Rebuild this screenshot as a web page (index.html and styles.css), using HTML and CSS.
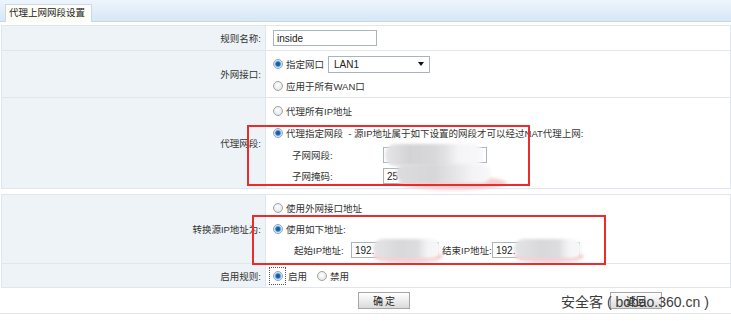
FILE: index.html
```html
<!DOCTYPE html>
<html lang="zh-CN">

<head>
    <meta charset="UTF-8">
    <meta name="viewport" content="width=device-width, initial-scale=1.0">
    <title>代理上网网段设置</title>
    <link rel="stylesheet" href="styles.css">
</head>

<body>
    <div class="tabbar">
        <div class="tab">代理上网网段设置</div>
    </div>

    <table class="form first">
        <colgroup>
            <col class="c-label">
            <col>
        </colgroup>
        <tr class="r-name">
            <td class="label">规则名称:</td>
            <td class="field"><input class="text" type="text" value="inside"></td>
        </tr>
        <tr class="r-wan">
            <td class="label">外网接口:</td>
            <td class="field">
                <div class="line">
                    <input class="radio" type="radio" name="wan" checked><span>指定网口</span>
                    <div class="select"><span>LAN1</span><i class="arrow"></i></div>
                </div>
                <div class="line">
                    <input class="radio" type="radio" name="wan"><span>应用于所有WAN口</span>
                </div>
            </td>
        </tr>
        <tr class="r-seg">
            <td class="label">代理网段:</td>
            <td class="field">
                <div class="line l22">
                    <input class="radio" type="radio" name="seg"><span>代理所有IP地址</span>
                </div>
                <div class="line l22">
                    <input class="radio" type="radio" name="seg" checked><span>代理指定网段&nbsp; - 源IP地址属于如下设置的网段才可以经过NAT代理上网:</span>
                </div>
                <div class="line l22 sub">
                    <span class="sublabel">子网网段:</span>
                    <div class="masked"><input class="text" type="text" value=""><div class="blob b-net"></div></div>
                </div>
                <div class="line sub">
                    <span class="sublabel">子网掩码:</span>
                    <div class="masked"><input class="text" type="text" value="25"><div class="smear s-mask"></div><div class="blob b-mask"></div></div>
                </div>
            </td>
        </tr>
    </table>

    <table class="form second">
        <colgroup>
            <col class="c-label">
            <col>
        </colgroup>
        <tr class="r-src">
            <td class="label">转换源IP地址为:</td>
            <td class="field">
                <div class="line l21">
                    <input class="radio" type="radio" name="src"><span>使用外网接口地址</span>
                </div>
                <div class="line l21">
                    <input class="radio" type="radio" name="src" checked><span>使用如下地址:</span>
                </div>
                <div class="line l21 sub2">
                    <span class="iplabel">起始IP地址:</span>
                    <div class="masked"><input class="text ip" type="text" value="192."><div class="smear s-ip"></div><div class="blob b-ip"></div></div>
                    <span class="iplabel end">结束IP地址:</span>
                    <div class="masked"><input class="text ip" type="text" value="192."><div class="smear s-ip"></div><div class="blob b-ip"></div></div>
                </div>
            </td>
        </tr>
        <tr class="r-on">
            <td class="label">启用规则:</td>
            <td class="field">
                <div class="line">
                    <span class="focus"><input class="radio" type="radio" name="on" checked></span><span>启用</span>
                    <input class="radio off" type="radio" name="on"><span>禁用</span>
                </div>
            </td>
        </tr>
    </table>

    <div class="actions">
        <button class="btn ok">确 定</button>
        <button class="btn back">返回</button>
    </div>

    <div class="mark mark-seg"></div>
    <div class="mark mark-src"></div>
    <div class="watermark">安全客 ( bobao.360.cn )</div>
</body>

</html>
```

FILE: styles.css
```css
* {
    box-sizing: border-box;
}

body {
    margin: 0;
    position: relative;
    overflow: hidden;
    font-family: "Liberation Sans", "Noto Sans CJK SC", sans-serif;
    font-size: 9.5px;
    color: #333;
    background: #fff;
}

.tabbar {
    height: 22px;
    padding: 4px 0 0 5px;
    background: linear-gradient(#eef5fc, #d6e7f5);
    border-bottom: 1px solid #c7d8e8;
}

.tab {
    display: inline-block;
    height: 18px;
    padding: 0 6px 0 3px;
    line-height: 16px;
    font-size: 9.5px;
    color: #222;
    background: #fdfdf6;
    border: 1px solid #c9d9e8;
    border-bottom: none;
}

.form {
    width: 730px;
    margin-left: 1px;
    table-layout: fixed;
    border-collapse: collapse;
    border: 1px solid #dfe6ef;
}

.first {
    margin-top: 3px;
}

.second {
    margin-top: 5px;
}

.c-label {
    width: 264px;
}

.form td {
    padding: 0;
    border-top: 1px solid #dfe6ef;
}

.label {
    text-align: right;
    padding-right: 4px !important;
    background: #eef3f8;
    border-right: 1px solid #dfe6ef;
    color: #333;
}

.field {
    padding-left: 7px !important;
}

.r-name td {
    height: 25px;
}

.r-wan td {
    height: 47px;
}

.r-seg td {
    height: 91px;
}

.r-src td {
    height: 69px;
}

.r-on td {
    height: 24px;
}

.line {
    display: flex;
    align-items: center;
    height: 20px;
    white-space: nowrap;
}

.r-wan .line {
    margin-top: 2px;
}

.l22 {
    height: 22px;
}

.l21 {
    height: 21px;
}

.radio {
    appearance: none;
    width: 10px;
    height: 10px;
    margin: 0 3px 0 0;
    border-radius: 50%;
    border: 1px solid #a3a3a3;
    background: radial-gradient(circle at 45% 40%, #ffffff, #dcdcdc);
    flex: none;
}

.radio:checked {
    border-color: #8fa8c0;
    background: radial-gradient(circle, #0b4c8a 0, #1f6fb8 2px, #9cc3e6 3px, #f2f7fc 4px);
}

.text {
    height: 16px;
    width: 104px;
    padding: 0 3px;
    border: 1px solid #a9b4bf;
    font-family: "Liberation Sans", sans-serif;
    font-size: 10px;
    color: #222;
    background: #fff;
}

.text:focus {
    outline: none;
}

.select {
    display: flex;
    align-items: center;
    justify-content: space-between;
    width: 102px;
    height: 17px;
    margin-left: 4px;
    padding: 0 5px;
    border: 1px solid #a9b4bf;
    font-size: 10px;
    color: #222;
}

.arrow {
    width: 0;
    height: 0;
    border-left: 3px solid transparent;
    border-right: 3px solid transparent;
    border-top: 4px solid #111;
}

.sub {
    padding-left: 19px;
}

.sublabel {
    display: inline-block;
    width: 91px;
}

.sub2 {
    padding-left: 21px;
}

.iplabel {
    display: inline-block;
    width: 57px;
}

.iplabel.end {
    width: 50px;
    margin-left: 3px;
}

.ip {
    width: 88px;
}

.masked {
    position: relative;
}

.blob {
    position: absolute;
    border-radius: 10px;
    filter: blur(1.5px);
}

.b-net {
    left: 2px;
    top: -3px;
    width: 98px;
    height: 22px;
    background: linear-gradient(90deg, #e6e6e8, #d3d3d6 25%, #d8d8db 50%, #e2e2e4 62%, #f5f5f7 75%, #f8f8fa);
}

.b-mask {
    left: 13px;
    top: -4px;
    width: 95px;
    height: 19px;
    background: linear-gradient(90deg, #dcdcdf, #d6d6d9 40%, #e4e4e6 60%, #f3f3f5 80%, #f8f8fa);
}

.b-ip {
    left: 22px;
    top: -3px;
    width: 68px;
    height: 19px;
    background: linear-gradient(90deg, #e4e4e6, #d8d8db 40%, #dcdcdf 65%, #f4f4f6 80%, #f8f8fa);
}

.smear {
    position: absolute;
    border-radius: 50%;
    background: #f6d0d3;
    filter: blur(1.5px);
}

.s-mask {
    left: 16px;
    top: 8px;
    width: 108px;
    height: 14px;
}

.s-ip {
    left: 22px;
    top: 8px;
    width: 70px;
    height: 13px;
}

.focus {
    display: inline-flex;
    align-items: center;
    justify-content: center;
    width: 17px;
    height: 18px;
    margin: 0 2px 0 -4px;
    border: 1px dotted #555;
}

.focus .radio {
    margin: 0;
}

.off {
    margin-left: 10px;
}

.actions {
    display: flex;
    align-items: center;
    height: 26px;
    padding-left: 358px;
    border-bottom: 1px solid #dfe6ef;
}

.btn {
    width: 52px;
    height: 17px;
    padding: 0;
    border: 1px solid #a6a6a6;
    background: linear-gradient(#ffffff, #dadada);
    font-family: "Noto Sans CJK SC", sans-serif;
    font-size: 10px;
    color: #222;
    line-height: 14px;
}

.back {
    margin-left: 200px;
}

.mark {
    position: absolute;
    border: 2px solid #ed2b2b;
}

.mark-seg {
    left: 247px;
    top: 125px;
    width: 283px;
    height: 61px;
}

.mark-src {
    left: 252px;
    top: 215px;
    width: 354px;
    height: 50px;
}

.watermark {
    position: absolute;
    left: 561px;
    top: 293px;
    font-size: 14px;
    line-height: 18px;
    color: #3c3c3c;
    white-space: nowrap;
}
```
